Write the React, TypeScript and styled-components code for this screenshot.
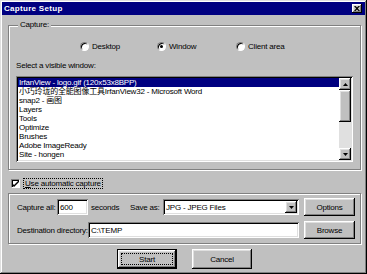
import styled, { createGlobalStyle, css } from "styled-components";

const GlobalStyle = createGlobalStyle`
    html, body {
        margin: 0;
        padding: 0;
        background: #c0c0c0;
    }
    body {
        font-family: "Liberation Sans", "Noto Sans CJK SC", Arial, sans-serif;
        font-size: 8px;
        letter-spacing: -0.2px;
        color: #000;
    }
`

const raised = css`
    box-shadow: inset -1px -1px #000, inset 1px 1px #fff, inset -2px -2px #808080, inset 2px 2px #dfdfdf;
`
const sunken = css`
    box-shadow: inset 1px 1px #808080, inset -1px -1px #fff, inset 2px 2px #000, inset -2px -2px #dfdfdf;
`

const windows = [
    "IrfanView - logo.gif (120x53x8BPP)",
    "小巧玲珑的全能图像工具IrfanView32 - Microsoft Word",
    "snap2 - 画图",
    "Layers",
    "Tools",
    "Optimize",
    "Brushes",
    "Adobe ImageReady",
    "Site - hongen",
    "IrfanView 3.36 - About IrfanView",
];

const App = () => {
    return (
        <>
            <GlobalStyle />
            <Window>
                <TitleBar>
                    <span>Capture Setup</span>
                    <CloseButton>
                        <svg width="6" height="5" viewBox="0 0 6 5">
                            <path d="M0 0h1.5l1.5 1.5 1.5-1.5h1.5l-2.2 2.5 2.2 2.5h-1.5l-1.5-1.5-1.5 1.5h-1.5l2.2-2.5z" fill="#000" />
                        </svg>
                    </CloseButton>
                </TitleBar>
                <Body>
                    <Group>
                        <legend>Capture:</legend>
                        <RadioRow>
                            <RadioLabel><Radio /> Desktop</RadioLabel>
                            <RadioLabel><Radio checked /> Window</RadioLabel>
                            <RadioLabel><Radio /> Client area</RadioLabel>
                        </RadioRow>
                        <FieldLabel>Select a visible window:</FieldLabel>
                        <ListBox>
                            <ListItems>
                                {windows.map((w, i) => (
                                    <ListItem key={w} selected={i === 0}>{w}</ListItem>
                                ))}
                            </ListItems>
                            <ScrollBar>
                                <ScrollButton>
                                    <svg width="5" height="3" viewBox="0 0 5 3"><path d="M2.5 0L5 3H0z" fill="#000" /></svg>
                                </ScrollButton>
                                <Thumb />
                                <Track />
                                <ScrollButton>
                                    <svg width="5" height="3" viewBox="0 0 5 3"><path d="M0 0h5L2.5 3z" fill="#000" /></svg>
                                </ScrollButton>
                            </ScrollBar>
                        </ListBox>
                    </Group>

                    <CheckRow>
                        <CheckBox>
                            <svg width="7" height="7" viewBox="0 0 7 7">
                                <path d="M0 3l2 2 5-5v2l-5 5-2-2z" fill="#000" />
                            </svg>
                        </CheckBox>
                        <FocusText><u>U</u>se automatic capture</FocusText>
                    </CheckRow>

                    <PlainGroup>
                        <FormRow>
                            <RowLabel width={40}>Capture all:</RowLabel>
                            <TextField width={31}>600</TextField>
                            <RowLabel width={39} style={{ marginLeft: 3 }}>seconds</RowLabel>
                            <RowLabel width={33}>Save as:</RowLabel>
                            <SelectField>
                                <span>JPG - JPEG Files</span>
                                <DropButton>
                                    <svg width="5" height="3" viewBox="0 0 5 3"><path d="M0 0h5L2.5 3z" fill="#000" /></svg>
                                </DropButton>
                            </SelectField>
                            <Button width={51}><ButtonFace>Options</ButtonFace></Button>
                        </FormRow>
                        <FormRow>
                            <RowLabel width={71}>Destination directory:</RowLabel>
                            <TextField grow>C:\TEMP</TextField>
                            <Button width={51}><ButtonFace>Browse</ButtonFace></Button>
                        </FormRow>
                    </PlainGroup>

                    <ButtonRow>
                        <Button width={60} isDefault><ButtonFace focused>Start</ButtonFace></Button>
                        <Button width={60}><ButtonFace>Cancel</ButtonFace></Button>
                    </ButtonRow>
                </Body>
            </Window>
        </>
    );
};

const Window = styled.div`
    box-sizing: border-box;
    width: 367px;
    height: 274px;
    padding: 2px;
    background: #c0c0c0;
    box-shadow: inset -1px -1px #000, inset 1px 1px #dfdfdf, inset -2px -2px #808080, inset 2px 2px #fff;
    display: flex;
    flex-direction: column;
`

const TitleBar = styled.div`
    height: 13px;
    background: #000080;
    color: #fff;
    font-weight: bold;
    font-size: 8px;
    letter-spacing: 0.3px;
    display: flex;
    align-items: center;
    justify-content: space-between;
    padding: 0 3px 0 2px;
`

const CloseButton = styled.div`
    width: 10px;
    height: 9px;
    background: #c0c0c0;
    ${raised};
    display: flex;
    align-items: center;
    justify-content: center;
`

const Body = styled.div`
    display: flex;
    flex-direction: column;
    padding: 5px 4px 0 6px;
`

const groupBorder = css`
    margin: 0;
    border: 1px solid #808080;
    box-shadow: inset 1px 1px #fff, 1px 1px #fff;
`

const Group = styled.fieldset`
    ${groupBorder};
    height: 150px;
    box-sizing: border-box;
    padding: 0 7px 0 7px;
    display: flex;
    flex-direction: column;

    legend {
        padding: 0 2px;
        margin-left: 2px;
        height: 10px;
        line-height: 10px;
        background: #c0c0c0;
    }
`

const RadioRow = styled.div`
    display: grid;
    grid-template-columns: 77px 79px auto;
    padding-left: 64px;
    margin-top: 10px;
    height: 12px;
    align-items: center;
`

const RadioLabel = styled.div`
    display: flex;
    align-items: center;
    gap: 3px;
`

const Radio = styled.span<{ checked?: boolean }>`
    box-sizing: border-box;
    width: 9px;
    height: 9px;
    border-radius: 50%;
    background: #fff;
    border: 1px solid;
    border-color: #808080 #fff #fff #808080;
    box-shadow: inset 1px 1px #000;
    position: relative;

    &::after {
        content: "";
        display: ${(p) => (p.checked ? "block" : "none")};
        position: absolute;
        left: 2px;
        top: 2px;
        width: 3px;
        height: 3px;
        border-radius: 50%;
        background: #000;
    }
`

const FieldLabel = styled.div`
    margin-top: 9px;
    height: 10px;
    line-height: 10px;
`

const ListBox = styled.div`
    margin-top: 5px;
    height: 86px;
    box-sizing: border-box;
    padding: 2px;
    background: #fff;
    ${sunken};
    display: flex;
    overflow: hidden;
`

const ListItems = styled.div`
    flex: 1;
    overflow: hidden;
`

const ListItem = styled.div<{ selected?: boolean }>`
    height: 9px;
    line-height: 9px;
    padding-left: 1px;
    white-space: nowrap;
    background: ${(p) => (p.selected ? "#000080" : "transparent")};
    color: ${(p) => (p.selected ? "#fff" : "#000")};
`

const ScrollBar = styled.div`
    width: 12px;
    display: flex;
    flex-direction: column;
`

const ScrollButton = styled.div`
    height: 12px;
    background: #c0c0c0;
    ${raised};
    display: flex;
    align-items: center;
    justify-content: center;
`

const Thumb = styled.div`
    height: 32px;
    background: #c0c0c0;
    ${raised};
`

const Track = styled.div`
    flex: 1;
    background: #e0e0e0;
`

const CheckRow = styled.div`
    display: flex;
    align-items: center;
    gap: 3px;
    margin: 8px 0 0 3px;
    height: 10px;
`

const CheckBox = styled.div`
    box-sizing: border-box;
    width: 9px;
    height: 9px;
    background: #fff;
    border: 1px solid;
    border-color: #808080 #fff #fff #808080;
    box-shadow: inset 1px 1px #000;
    display: flex;
    align-items: center;
    justify-content: center;
`

const FocusText = styled.span`
    border: 1px dotted #000;
    padding: 0 1px;
    line-height: 9px;
`

const PlainGroup = styled.div`
    ${groupBorder};
    margin-top: 5px;
    height: 51px;
    box-sizing: border-box;
    padding: 5px 5px 0 8px;
    display: flex;
    flex-direction: column;
    gap: 7px;
`

const FormRow = styled.div`
    display: flex;
    align-items: center;
    height: 16px;
`

const RowLabel = styled.span<{ width: number }>`
    width: ${(p) => p.width}px;
    flex-shrink: 0;
    white-space: nowrap;
`

const fieldBase = css`
    box-sizing: border-box;
    height: 16px;
    background: #fff;
    ${sunken};
    padding: 0 3px;
    display: flex;
    align-items: center;
`

const TextField = styled.div<{ width?: number; grow?: boolean }>`
    ${fieldBase};
    width: ${(p) => (p.width ? `${p.width}px` : "auto")};
    flex: ${(p) => (p.grow ? 1 : "none")};
`

const SelectField = styled.div`
    ${fieldBase};
    flex: 1;
    justify-content: space-between;
    padding-right: 2px;
`

const DropButton = styled.div`
    width: 12px;
    height: 12px;
    background: #c0c0c0;
    ${raised};
    display: flex;
    align-items: center;
    justify-content: center;
`

const Button = styled.div<{ width: number; isDefault?: boolean }>`
    box-sizing: border-box;
    width: ${(p) => p.width}px;
    height: 18px;
    margin-left: 5px;
    background: #c0c0c0;
    ${raised};
    border: ${(p) => (p.isDefault ? "1px solid #000" : "none")};
    display: flex;
    align-items: center;
    justify-content: center;
    flex-shrink: 0;
    padding: 3px;
`

const ButtonFace = styled.span<{ focused?: boolean }>`
    flex: 1;
    align-self: stretch;
    display: flex;
    align-items: center;
    justify-content: center;
    border: 1px dotted ${(p) => (p.focused ? "#000" : "transparent")};
`

const ButtonRow = styled.div`
    display: flex;
    justify-content: center;
    gap: 15px;
    margin-top: 5px;

    & > div {
        margin-left: 0;
        height: 20px;
    }
`

export default App;
